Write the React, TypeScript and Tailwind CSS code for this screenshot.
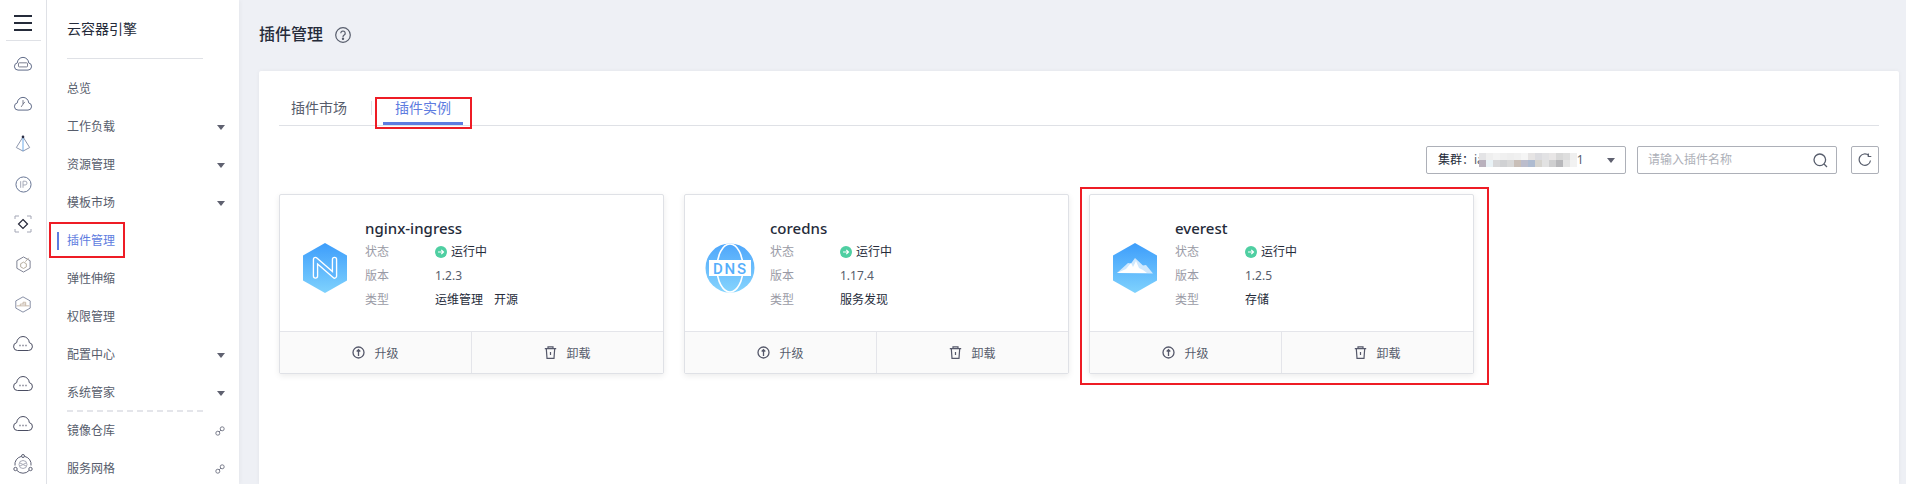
import React from "react";

const Cloud = ({ w = 22, color = "#4a4d62", children }: { w?: number; color?: string; children?: React.ReactNode }) => (
  <svg width={w} height={(w * 18) / 22} viewBox="0 0 22 18" fill="none" stroke={color} strokeWidth="1">
    <path d="M5.5 15.5h11a4 4 0 0 0 .8-7.9A6.4 6.4 0 0 0 11 1.5a6.4 6.400 0 0 0-6.300 6.100 4 4 0 0 0 .8 7.900z" />
    {children}
  </svg>
);

const Dots = () => <path d="M7.500 10.500h1M10.500 10.500h1M13.500 10.500h1" strokeWidth="1.400" />;

const railIcons: React.ReactNode[] = [
  <Cloud w={20} color="#4f5c7c"><rect x="6" y="7.500" width="10" height="4.500" rx="1" stroke="#6d7183" /></Cloud>,
  <Cloud w={20} color="#4f5c7c"><path d="M11 4.500v4.500M11 9l2-2.500M9 12l2-3" stroke="#6d7183" /></Cloud>,
  <svg width="16" height="18" viewBox="0 0 18 20" fill="none" stroke="#7d88a2" strokeWidth="1">
    <path d="M9 2L1.500 14 9 18l7.500-4z" /><path d="M9 2v16" stroke="#5aa0e6" /><circle cx="9" cy="2" r="1.500" fill="#2b2e45" stroke="none" />
  </svg>,
  <svg width="17" height="17" viewBox="0 0 18 18" fill="none" stroke="#5f6d8e" strokeWidth="1">
    <circle cx="9" cy="9" r="8" /><path d="M6 5.500v7M8.500 12.500v-7h2.200a2 2 0 0 1 0 4H8.500" stroke="#a2a6b5" />
  </svg>,
  <svg width="18" height="18" viewBox="0 0 18 18" fill="none" stroke="#a3a6b5" strokeWidth="1">
    <path d="M1 4V1h4M13 1h4v3M17 14v3h-4M5 17H1v-3" />
    <path d="M9 4.500L13.500 9 9 13.500 4.500 9z" stroke="#26283a" strokeWidth="1.200" />
  </svg>,
  <svg width="17" height="19" viewBox="0 0 18 20" fill="none" stroke="#787c8e" strokeWidth="1">
    <path d="M9 2l7 4v8l-7 4-7-4V6z" /><path d="M9 7.500l3 1.700v3.300L9 14.200l-3-1.700V9.200zM11 7l3.500-4" stroke="#b3a999" />
  </svg>,
  <svg width="18" height="19" viewBox="0 0 20 20" fill="none" stroke="#7a839c" strokeWidth="1">
    <path d="M10 1.500l8 4.500v8l-8 4.500-8-4.500V6z" /><path d="M3 11.500h14M7 11.500V9.500h6v2M10 9.500v-2h3v2" stroke="#c4b6a6" />
  </svg>,
  <Cloud><Dots /></Cloud>,
  <Cloud><Dots /></Cloud>,
  <Cloud><Dots /></Cloud>,
  <svg width="20" height="20" viewBox="0 0 20 20" fill="none" stroke="#5d6074" strokeWidth="1">
    <path d="M8 2.500a8 8 0 0 0-6 9M12 2.500a8 8 0 0 1 6 9M4 16.500a8 8 0 0 0 12 0" />
    <circle cx="10" cy="2" r="1.500" /><circle cx="2.500" cy="15" r="1.700" /><circle cx="17.500" cy="15" r="1.700" />
    <circle cx="10" cy="10.500" r="4" stroke="#a9abb8" /><path d="M7 9l6 3M13 9l-6 3" stroke="#a9abb8" />
  </svg>,
];

const Caret = () => <span className="h-0 w-0 border-x-[4px] border-t-[5px] border-x-transparent border-t-[#5f6170]" />;

const LinkIcon = () => (
  <svg width="10" height="10" viewBox="0 0 10 10" fill="none" stroke="#7a7d8c" strokeWidth="1">
    <circle cx="7.200" cy="2.800" r="2" /><circle cx="2.800" cy="7.200" r="2" /><path d="M4 6l2-2" />
  </svg>
);

type NavItem = { label: string; trail?: "caret" | "link"; active?: boolean; boxed?: boolean };
const navItems: NavItem[] = [
  { label: "总览" },
  { label: "工作负载", trail: "caret" },
  { label: "资源管理", trail: "caret" },
  { label: "模板市场", trail: "caret" },
  { label: "插件管理", active: true, boxed: true },
  { label: "弹性伸缩" },
  { label: "权限管理" },
  { label: "配置中心", trail: "caret" },
  { label: "系统管家", trail: "caret" },
  { label: "镜像仓库", trail: "link" },
  { label: "服务网格", trail: "link" },
];

const StatusDot = () => (
  <svg width="12" height="12" viewBox="0 0 12 12" fill="none" className="mr-1">
    <circle cx="6" cy="6" r="6" fill="#4fcfa2" />
    <path d="M3 6h5.400M6.300 3.800L8.500 6 6.300 8.200" stroke="#fff" strokeWidth="1.200" />
  </svg>
);

const HexLogo = ({ id, children }: { id: string; children: React.ReactNode }) => (
  <svg width="44" height="50" viewBox="0 0 44 50">
    <defs>
      <linearGradient id={id} x1="0" y1="0" x2="0" y2="1">
        <stop offset="0" stopColor="#3d9dfb" />
        <stop offset="1" stopColor="#7fd2fd" />
      </linearGradient>
    </defs>
    <path d="M22 0l22 12.500v25L22 50 0 37.500v-25z" fill={`url(#${id})`} />
    {children}
  </svg>
);

const nPath = "M12.500 33V16.500L31.500 33V16.500";
const NginxLogo = () => (
  <HexLogo id="gradN">
    <path d={nPath} fill="none" stroke="#fff" strokeWidth="5.500" strokeLinejoin="round" strokeLinecap="round" />
    <path d={nPath} fill="none" stroke="#5db4fc" strokeWidth="2.800" strokeLinejoin="round" strokeLinecap="round" />
  </HexLogo>
);

const DnsLogo = () => (
  <svg width="50" height="50" viewBox="0 0 50 50">
    <defs>
      <linearGradient id="gradD" x1="0" y1="0" x2="0" y2="1">
        <stop offset="0" stopColor="#4ea6fb" />
        <stop offset="1" stopColor="#86d4fd" />
      </linearGradient>
    </defs>
    <circle cx="25" cy="25" r="24.500" fill="url(#gradD)" />
    <ellipse cx="25" cy="25" rx="13" ry="24" fill="none" stroke="#fff" strokeWidth="1.600" />
    <rect x="4" y="17" width="42" height="16" fill="#fff" />
    <text x="25.500" y="30.500" textAnchor="middle" fontSize="15" fontWeight="500" letterSpacing="1.800" fill="#55aefb" fontFamily="Roboto, sans-serif">DNS</text>
  </svg>
);

const EverestLogo = () => (
  <HexLogo id="gradE">
    <path d="M4 30l11-10 3 .5 4-5.500 8 7.500 3-.5 7 8.500z" fill="#cfe8fd" />
    <path d="M4 30l9-4 5-6 2 4 3-6 3 7 4 2 4 3z" fill="#fff" />
  </HexLogo>
);

const UpIcon = () => (
  <svg width="13" height="13" viewBox="0 0 13 13" fill="none" stroke="#55586a" strokeWidth="1.300">
    <circle cx="6.500" cy="6.500" r="5.500" /><path d="M6.500 10V4M4.700 5.500l1.800-1.800 1.800 1.800" />
  </svg>
);

const TrashIcon = () => (
  <svg width="13" height="13" viewBox="0 0 13 13" fill="none" stroke="#55586a" strokeWidth="1.200">
    <path d="M.8 2.600h11.400M4 2.600V.8h5v1.800M2.300 2.600l.7 9.700h7l.7-9.700M6.500 6v3" />
  </svg>
);

type Plugin = { name: string; version: string; types: string[]; logo: React.ReactNode };
const plugins: Plugin[] = [
  { name: "nginx-ingress", version: "1.2.3", types: ["运维管理", "开源"], logo: <NginxLogo /> },
  { name: "coredns", version: "1.17.4", types: ["服务发现"], logo: <DnsLogo /> },
  { name: "everest", version: "1.2.5", types: ["存储"], logo: <EverestLogo /> },
];

const Row = ({ label, children }: { label: string; children: React.ReactNode }) => (
  <div className="flex h-6 items-center">
    <span className="w-[70px] text-[#9a9ba6]">{label}</span>
    <div className="flex items-center gap-[11px] text-[#252b3a]">{children}</div>
  </div>
);

const PluginCard = ({ p, boxed }: { p: Plugin; boxed?: boolean }) => (
  <div className="relative h-[180px] w-[385px] rounded-[2px] border border-[#dfe1e6] bg-white shadow-[0_2px_6px_rgba(0,0,0,0.08)]">
    {boxed && <div className="pointer-events-none absolute -left-[10px] -top-[8px] h-[198px] w-[409px] border-2 border-[#ee1c25]" />}
    <div className="flex h-[136px]">
      <div className="flex w-[85px] items-center justify-center pl-[5px] pt-[10px]">
        <div className="flex w-[50px] justify-center">{p.logo}</div>
      </div>
      <div className="pt-[21px] text-[12px]">
        <div className="h-[24px] text-[15px] font-medium leading-[24px] text-[#252b3a]">{p.name}</div>
        <Row label="状态"><span className="flex items-center"><StatusDot />运行中</span></Row>
        <Row label="版本"><span className="text-[#575d6c]">{p.version}</span></Row>
        <Row label="类型">{p.types.map((t) => <span key={t}>{t}</span>)}</Row>
      </div>
    </div>
    <div className="flex h-[42px] border-t border-[#e4e5ea] bg-[#fafafa] text-[12px] text-[#575d6c]">
      <div className="flex w-[192px] items-center justify-center gap-[9px] border-r border-[#e4e5ea]"><UpIcon /><span className="translate-y-px">升级</span></div>
      <div className="flex flex-1 items-center justify-center gap-[9px]"><TrashIcon /><span className="translate-y-px">卸载</span></div>
    </div>
  </div>
);

const mosaic = [
  "#e4e4e6","#efefef","#f3f3f3","#f0f0f0","#eeeeee","#f0f0f0","#f5f5f5","#e6e4e4","#dcdce0","#e2e2e4","#e8e6e6","#d8d8d8","#dedede","#efefef",
  "#b9b1bd","#e9f2f6","#d8d8da","#d0d1d3","#d8d8d8","#c9bfb8","#bcbdcc","#aebbd0","#d6d4cf","#e2e2e2","#cfcfd0","#b8b8bb","#e4e4e4","#f2f2f2",
];

export default function App() {
  return (
    <div className="flex h-[484px] w-[1906px] overflow-hidden bg-[#eef0f5] font-['Noto_Sans','Noto_Sans_CJK_SC',sans-serif] text-[12px]">
      {/* rail */}
      <div className="flex h-full w-[47px] shrink-0 flex-col items-center border-r-[1.500px] border-[#dfe1e6] bg-white">
        <div className="flex h-[45px] w-[35px] flex-col items-center border-b border-[#dfe1e6] pt-[15px]">
          <div className="flex w-[18px] flex-col gap-[5px]">
            <span className="h-[2px] bg-[#252b3a]" />
            <span className="h-[2px] bg-[#252b3a]" />
            <span className="h-[2px] bg-[#252b3a]" />
          </div>
        </div>
        <div className="flex flex-col items-center pt-[3px]">
          {railIcons.map((icon, i) => (
            <div key={i} className="flex h-[40px] items-center justify-center">{icon}</div>
          ))}
        </div>
      </div>

      {/* secondary nav */}
      <div className="h-full w-[192px] shrink-0 bg-white shadow-[2px_0_4px_rgba(0,0,0,0.03)]">
        <div className="mx-5 flex h-[59px] w-[136px] items-start border-b border-[#dfe1e6] pt-[19px] text-[14px] leading-[20px] text-[#252b3a]">云容器引擎</div>
        <div className="pt-[11px]">
          {navItems.map((item) => (
            <React.Fragment key={item.label}>
              {item.label === "镜像仓库" && <div className="mx-5 -mt-[2px] h-[2px] w-[136px] border-t-2 border-dashed border-[#e4e5ea]" />}
              <div className={`relative flex h-[38px] items-center pl-5 pr-[14px] ${item.active ? "text-[#5e7ce0]" : "text-[#575d6c]"}`}>
                {item.active && <span className="absolute left-[10px] top-[10px] h-[18px] w-[2px] bg-[#5e7ce0]" />}
                {item.boxed && <span className="pointer-events-none absolute left-[2px] top-0 h-[36px] w-[76px] border-2 border-[#ee1c25]" />}
                <span className="flex-1">{item.label}</span>
                {item.trail === "caret" && <Caret />}
                {item.trail === "link" && <LinkIcon />}
              </div>
            </React.Fragment>
          ))}
        </div>
      </div>

      {/* main */}
      <div className="h-full min-w-0 flex-1 pl-5 pr-[7px]">
        <div className="flex h-[71px] items-start pt-[22px]">
          <span className="text-[16px] font-medium leading-[24px] text-[#252b3a]">插件管理</span>
          <svg width="16" height="16" viewBox="0 0 16 16" fill="none" stroke="#575d6c" strokeWidth="1.200" className="ml-[12px] mt-[5px]">
            <circle cx="8" cy="8" r="7.300" />
            <path d="M5.800 6.200a2.200 2.200 0 1 1 3.400 1.900c-.8.500-1.200 1-1.200 1.800" /><circle cx="8" cy="11.800" r=".6" fill="#575d6c" />
          </svg>
        </div>
        <div className="h-[413px] rounded-t-[2px] bg-white px-5 pt-[22px] shadow-[0_0_4px_rgba(0,0,0,0.05)]">
          {/* tabs */}
          <div className="relative flex h-[33px] items-start border-b border-[#dfe1e6] text-[14px] leading-[20px]">
            <div className="w-[92px] pl-[12px] pt-[5px] text-[#575d6c]">插件市场</div>
            <span className="mt-[8px] h-[14px] w-px bg-[#dfe1e6]" />
            <div className="relative ml-[11px] h-[32px] w-[80px] pt-[5px] text-center text-[#5e7ce0]">
              插件实例
              <span className="absolute bottom-0 left-0 h-[3px] w-[80px] bg-[#5e7ce0]" />
              <span className="pointer-events-none absolute -left-[8px] top-[4px] h-[32px] w-[97px] border-2 border-[#ee1c25]" />
            </div>
          </div>
          {/* toolbar */}
          <div className="mt-[20px] flex h-[28px] items-center justify-end">
            <div className="flex h-[28px] w-[200px] items-center rounded-[2px] border border-[#adb0b8] pl-[11px] pr-[10px]">
              <span className="text-[#252b3a]">集群：</span>
              <span className="text-[#575d6c]">ia</span>
              <span className="-ml-[5px] grid w-[98px] grid-cols-[repeat(14,7px)]">
                {mosaic.map((c, i) => <span key={i} className="h-[7px]" style={{ backgroundColor: c }} />)}
              </span>
              <span className="text-[#575d6c]">1</span>
              <span className="flex-1" />
              <Caret />
            </div>
            <div className="ml-[11px] flex h-[28px] w-[200px] items-center justify-between rounded-[2px] border border-[#adb0b8] pl-[10px] pr-[8px] text-[#adb0b8]">
              请输入插件名称
              <svg width="15" height="15" viewBox="0 0 15 15" fill="none" stroke="#575d6c" strokeWidth="1.300">
                <circle cx="6.800" cy="6.800" r="5.800" /><path d="M11 11l3 3" />
              </svg>
            </div>
            <div className="ml-[14px] flex h-[28px] w-[28px] items-center justify-center rounded-[2px] border border-[#adb0b8]">
              <svg width="14" height="14" viewBox="0 0 14 14" fill="none" stroke="#575d6c" strokeWidth="1.200">
                <path d="M12.500 7.500A5.700 5.700 0 1 1 10.700 2.400" /><path d="M10.300 0.500v3h3" />
              </svg>
            </div>
          </div>
          {/* cards */}
          <div className="mt-[20px] flex gap-5">
            {plugins.map((p, i) => <PluginCard key={p.name} p={p} boxed={i === 2} />)}
          </div>
        </div>
      </div>
    </div>
  );
}
